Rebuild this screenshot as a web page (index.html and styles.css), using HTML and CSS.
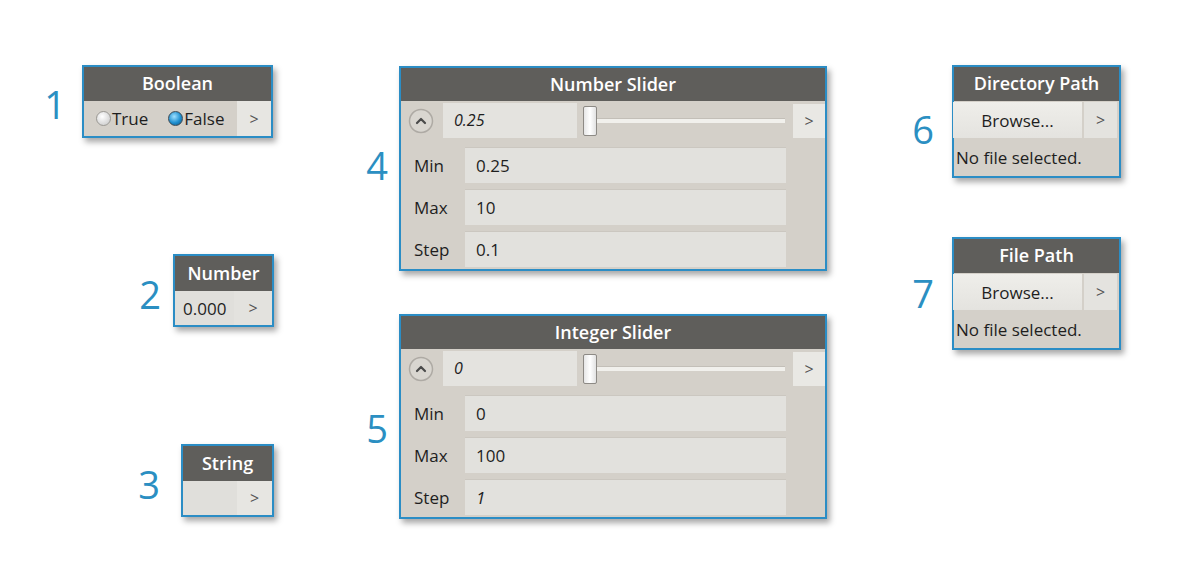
FILE: index.html
```html
<!DOCTYPE html>
<html lang="en">
<head>
    <meta charset="UTF-8">
    <meta name="viewport" content="width=device-width, initial-scale=1.0">
    <title>Input Nodes</title>
    <link rel="stylesheet" href="styles.css">
</head>
<body>

    <main class="canvas">

        <section class="col col-a">
            <div class="item item-1">
                <span class="tag">1</span>
                <div class="node node-bool">
                    <div class="node-head">Boolean</div>
                    <div class="node-body">
                        <label class="radio"><span class="dot"></span>True</label>
                        <label class="radio"><span class="dot on"></span>False</label>
                        <span class="out">&gt;</span>
                    </div>
                </div>
            </div>

            <div class="item item-2">
                <span class="tag">2</span>
                <div class="node node-num">
                    <div class="node-head">Number</div>
                    <div class="node-body">
                        <span class="field">0.000</span>
                        <span class="out">&gt;</span>
                    </div>
                </div>
            </div>

            <div class="item item-3">
                <span class="tag">3</span>
                <div class="node node-str">
                    <div class="node-head">String</div>
                    <div class="node-body">
                        <span class="field"></span>
                        <span class="out">&gt;</span>
                    </div>
                </div>
            </div>
        </section>

        <section class="col col-b">
            <div class="item item-4">
                <span class="tag">4</span>
                <div class="node node-slider">
                    <div class="node-head">Number Slider</div>
                    <div class="slide-row">
                        <svg class="toggle" width="26" height="26" viewBox="0 0 26 26">
                            <circle cx="13" cy="13" r="11.5" fill="#d9d6d0" stroke="#aeaaa4" stroke-width="1.5"/>
                            <path d="M9 15 L13 11 L17 15" fill="none" stroke="#4a4a4a" stroke-width="2.2" stroke-linecap="round" stroke-linejoin="round"/>
                        </svg>
                        <span class="value">0.25</span>
                        <span class="thumb"></span>
                        <span class="track"></span>
                        <span class="out">&gt;</span>
                    </div>
                    <div class="prop"><span class="prop-name">Min</span><span class="prop-field">0.25</span></div>
                    <div class="prop"><span class="prop-name">Max</span><span class="prop-field">10</span></div>
                    <div class="prop"><span class="prop-name">Step</span><span class="prop-field">0.1</span></div>
                </div>
            </div>

            <div class="item item-5">
                <span class="tag">5</span>
                <div class="node node-slider">
                    <div class="node-head">Integer Slider</div>
                    <div class="slide-row">
                        <svg class="toggle" width="26" height="26" viewBox="0 0 26 26">
                            <circle cx="13" cy="13" r="11.5" fill="#d9d6d0" stroke="#aeaaa4" stroke-width="1.5"/>
                            <path d="M9 15 L13 11 L17 15" fill="none" stroke="#4a4a4a" stroke-width="2.2" stroke-linecap="round" stroke-linejoin="round"/>
                        </svg>
                        <span class="value">0</span>
                        <span class="thumb"></span>
                        <span class="track"></span>
                        <span class="out">&gt;</span>
                    </div>
                    <div class="prop"><span class="prop-name">Min</span><span class="prop-field">0</span></div>
                    <div class="prop"><span class="prop-name">Max</span><span class="prop-field">100</span></div>
                    <div class="prop"><span class="prop-name">Step</span><span class="prop-field italic">1</span></div>
                </div>
            </div>
        </section>

        <section class="col col-c">
            <div class="item item-6">
                <span class="tag">6</span>
                <div class="node node-path">
                    <div class="node-head">Directory Path</div>
                    <div class="browse-row">
                        <span class="browse">Browse...</span>
                        <span class="out">&gt;</span>
                    </div>
                    <div class="path-text">No file selected.</div>
                </div>
            </div>

            <div class="item item-7">
                <span class="tag">7</span>
                <div class="node node-path">
                    <div class="node-head">File Path</div>
                    <div class="browse-row">
                        <span class="browse">Browse...</span>
                        <span class="out">&gt;</span>
                    </div>
                    <div class="path-text">No file selected.</div>
                </div>
            </div>
        </section>

    </main>

</body>
</html>
```

FILE: styles.css
```css
body {
    margin: 0;
    background-color: #ffffff;
    font-family: "Open Sans", "DejaVu Sans", sans-serif;
    color: #1e1e1e;
}

.canvas {
    display: flex;
    width: 1200px;
    height: 582px;
    overflow: hidden;
}

.col {
    display: flex;
    flex-direction: column;
    align-items: flex-end;
}

.col-a {
    width: 274px;
}

.col-b {
    width: 553px;
}

.col-c {
    width: 294px;
}

.item {
    display: flex;
    align-items: flex-start;
}

/* big blue numbers */
.tag {
    font-size: 38px;
    font-weight: 400;
    line-height: 1;
    color: #2b8fc2;
}

.item-1 { margin-top: 65px; margin-right: 1px; }
.item-1 .tag { margin-top: 20px; margin-right: 16px; }

.item-2 { margin-top: 116px; }
.item-2 .tag { margin-top: 21px; margin-right: 12px; }

.item-3 { margin-top: 117px; }
.item-3 .tag { margin-top: 21px; margin-right: 21px; }

.item-4 { margin-top: 66px; }
.item-4 .tag { margin-top: 80px; margin-right: 11px; }

.item-5 { margin-top: 43px; }
.item-5 .tag { margin-top: 95px; margin-right: 11px; }

.item-6 { margin-top: 65px; }
.item-6 .tag { margin-top: 45px; margin-right: 18px; }

.item-7 { margin-top: 59px; }
.item-7 .tag { margin-top: 37px; margin-right: 18px; }

/* node shell */
.node {
    box-sizing: border-box;
    border: 2px solid #2b8dc5;
    background-color: #d4d0c9;
    box-shadow: 3px 4px 6px rgba(0, 0, 0, 0.35);
}

.node-head {
    height: 34px;
    line-height: 33px;
    background-color: #5f5e5b;
    color: #ffffff;
    font-size: 18px;
    font-weight: 600;
    text-align: center;
    white-space: nowrap;
}

.node-body {
    display: flex;
    align-items: center;
    height: 35px;
    font-size: 17px;
}

.out {
    flex: none;
    display: flex;
    align-items: center;
    justify-content: center;
    align-self: stretch;
    background-color: #e7e6e2;
    color: #555555;
    font-size: 16px;
}

/* boolean */
.node-bool {
    width: 191px;
}

.node-bool .node-body {
    padding-left: 12px;
}

.radio {
    display: flex;
    align-items: center;
}

.radio + .radio {
    margin-left: 20px;
}

.dot {
    box-sizing: border-box;
    width: 15px;
    height: 15px;
    margin-right: 1px;
    border: 1px solid #9a9893;
    border-radius: 50%;
    background: radial-gradient(circle at 40% 35%, #ffffff, #d6d6d6 70%);
}

.dot.on {
    border-color: #3b4a55;
    background: radial-gradient(circle at 40% 35%, #9fe0ff, #1e8fd0 55%, #11517a);
}

.node-bool .out {
    margin-left: auto;
    width: 34px;
}

/* number / string */
.node-num {
    width: 101px;
}

.node-str {
    width: 93px;
}

.node-num .node-head,
.node-str .node-head {
    height: 35px;
    line-height: 35px;
}

.node-num .node-body,
.node-str .node-body {
    height: 34px;
    align-items: stretch;
}

.field {
    flex: 1;
    display: flex;
    align-items: center;
    padding-left: 8px;
    background-color: #e0dfdb;
}

.node-num .out {
    width: 38px;
    background-color: #e3e2de;
}

.node-str .out {
    width: 35px;
}

/* sliders */
.node-slider {
    width: 428px;
    padding-bottom: 2px;
}

.node-slider .node-head {
    height: 33px;
    line-height: 33px;
}

.slide-row {
    display: flex;
    align-items: center;
    height: 39px;
    padding-left: 7px;
}

.toggle {
    flex: none;
}

.value {
    box-sizing: border-box;
    width: 134px;
    height: 35px;
    margin-left: 9px;
    padding-left: 11px;
    line-height: 35px;
    background-color: #e4e3df;
    font-size: 16px;
    font-style: italic;
}

.thumb {
    box-sizing: border-box;
    width: 14px;
    height: 30px;
    margin-left: 6px;
    border: 1px solid #8d8a85;
    border-radius: 2px;
    background: linear-gradient(to right, #e6e6e6, #ffffff 50%, #e2e2e2);
}

.track {
    width: 188px;
    height: 4px;
    border-top: 1px solid #c3bfb8;
    background-color: #f1f0ec;
}

.slide-row .out {
    align-self: auto;
    width: 32px;
    height: 34px;
    margin-left: 8px;
    background-color: #e9e8e4;
}

.prop {
    display: flex;
    align-items: center;
    margin-top: 6px;
    font-size: 17px;
}

.prop:nth-child(3) {
    margin-top: 7px;
}

.prop-name {
    width: 51px;
    padding-left: 13px;
}

.prop-field {
    box-sizing: border-box;
    width: 321px;
    height: 36px;
    padding-left: 11px;
    line-height: 36px;
    border-top: 1px solid #cbc7c0;
    background-color: #e2e1dd;
}

.italic {
    font-style: italic;
}

/* path nodes */
.node-path {
    width: 169px;
    height: 113px;
}

.browse-row {
    display: flex;
    height: 36px;
    margin-top: 1px;
}

.browse {
    display: flex;
    align-items: center;
    justify-content: center;
    width: 129px;
    margin-left: -1px;
    background: linear-gradient(#efeeea, #e4e3df);
    font-size: 17px;
}

.browse-row .out {
    width: 33px;
    margin-left: 2px;
    background-color: #e4e3df;
}

.path-text {
    padding: 8px 0 0 2px;
    font-size: 17px;
    white-space: nowrap;
}
```
